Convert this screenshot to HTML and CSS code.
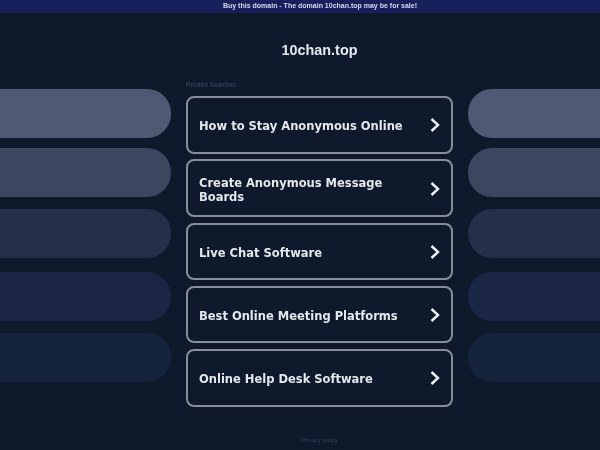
FILE: index.html
```html
<!DOCTYPE html>
<html>
<head>
	<meta charset="UTF-8">
	<title>10chan.top</title>
	<link rel="stylesheet" href="styles.css">
</head>
<body>
	<div class="page">
		<div class="top-bar">Buy this domain - The domain 10chan.top may be for sale!</div>
		<h1 class="domain">10chan.top</h1>
		<div class="page-grid">
			<div class="pills pills-left">
				<div class="pill shade-1"></div>
				<div class="pill shade-2"></div>
				<div class="pill shade-3"></div>
				<div class="pill shade-4"></div>
				<div class="pill shade-5"></div>
			</div>
			<div class="results">
				<div class="results-label">Related Searches</div>
				<a class="result" href="#">
					<span>How to Stay Anonymous Online</span>
					<svg class="chevron" viewBox="0 0 12 16"><path d="M2.5 2 L9 8 L2.5 14"/></svg>
				</a>
				<a class="result" href="#">
					<span>Create Anonymous Message Boards</span>
					<svg class="chevron" viewBox="0 0 12 16"><path d="M2.5 2 L9 8 L2.5 14"/></svg>
				</a>
				<a class="result" href="#">
					<span>Live Chat Software</span>
					<svg class="chevron" viewBox="0 0 12 16"><path d="M2.5 2 L9 8 L2.5 14"/></svg>
				</a>
				<a class="result" href="#">
					<span>Best Online Meeting Platforms</span>
					<svg class="chevron" viewBox="0 0 12 16"><path d="M2.5 2 L9 8 L2.5 14"/></svg>
				</a>
				<a class="result" href="#">
					<span>Online Help Desk Software</span>
					<svg class="chevron" viewBox="0 0 12 16"><path d="M2.5 2 L9 8 L2.5 14"/></svg>
				</a>
				<div class="results-foot">Privacy policy</div>
			</div>
			<div class="pills pills-right">
				<div class="pill shade-1"></div>
				<div class="pill shade-2"></div>
				<div class="pill shade-3"></div>
				<div class="pill shade-4"></div>
				<div class="pill shade-5"></div>
			</div>
		</div>
	</div>
</body>
</html>
```
FILE: styles.css
```css
html, body {
	margin: 0;
	padding: 0;
	height: 100%;
	overflow: hidden;
	background-color: #0e1a2c;
	font-family: "Liberation Sans", Arial, sans-serif;
}

.page {
	width: 600px;
	filter: blur(0.45px);
}

/* headings centre on the middle column, which sits right of the window centre */
.top-bar {
	box-sizing: border-box;
	height: 13px;
	padding-left: 40px;
	line-height: 12px;
	text-align: center;
	font-size: 7px;
	font-weight: bold;
	color: #d4d8ea;
	background-color: #18205c;
}

.domain {
	margin: 0;
	padding: 28px 0 0 39px;
	height: 20px;
	line-height: 18px;
	text-align: center;
	font-size: 14.4px;
	font-weight: bold;
	color: #e6e9ee;
}

.page-grid {
	display: grid;
	grid-template-columns: 171px 267px 132px;
	column-gap: 15px;
	padding-top: 28px;
}

.pills {
	display: flex;
	flex-direction: column;
}

.pill {
	height: 49px;
}

.pills-left .pill {
	border-radius: 0 24px 24px 0;
}

.pills-right .pill {
	border-radius: 24px 0 0 24px;
}

.shade-1 {
	margin-bottom: 10px;
	background-color: #4e5a73;
}

.shade-2 {
	margin-bottom: 12px;
	background-color: #3a475f;
}

.shade-3 {
	margin-bottom: 14px;
	background-color: #252f49;
}

.shade-4 {
	margin-bottom: 12px;
	background-color: #1a2643;
}

.shade-5 {
	background-color: #16233c;
}

.results {
	display: flex;
	flex-direction: column;
	gap: 5.75px;
}

.results-label {
	height: 0;
	line-height: 0;
	margin-top: -4px;
	margin-bottom: 5.4px;
	font-size: 6.3px;
	color: #3d4a64;
}

.result {
	box-sizing: border-box;
	height: 57.5px;
	padding: 3px 10px 0 11px;
	display: flex;
	align-items: center;
	justify-content: space-between;
	border: 2px solid #878d99;
	border-radius: 8px;
	text-decoration: none;
	font-family: "DejaVu Sans", sans-serif;
	font-size: 11.5px;
	font-weight: bold;
	line-height: 14px;
	color: #e4e7eb;
}

.result span {
	width: 205px;
}

.chevron {
	width: 12px;
	height: 16px;
	margin-top: -2px;
	flex-shrink: 0;
	fill: none;
	stroke: #eef0f3;
	stroke-width: 2.4;
}

.results-foot {
	margin-top: 25px;
	text-align: center;
	font-size: 6px;
	color: #333f57;
}
```
